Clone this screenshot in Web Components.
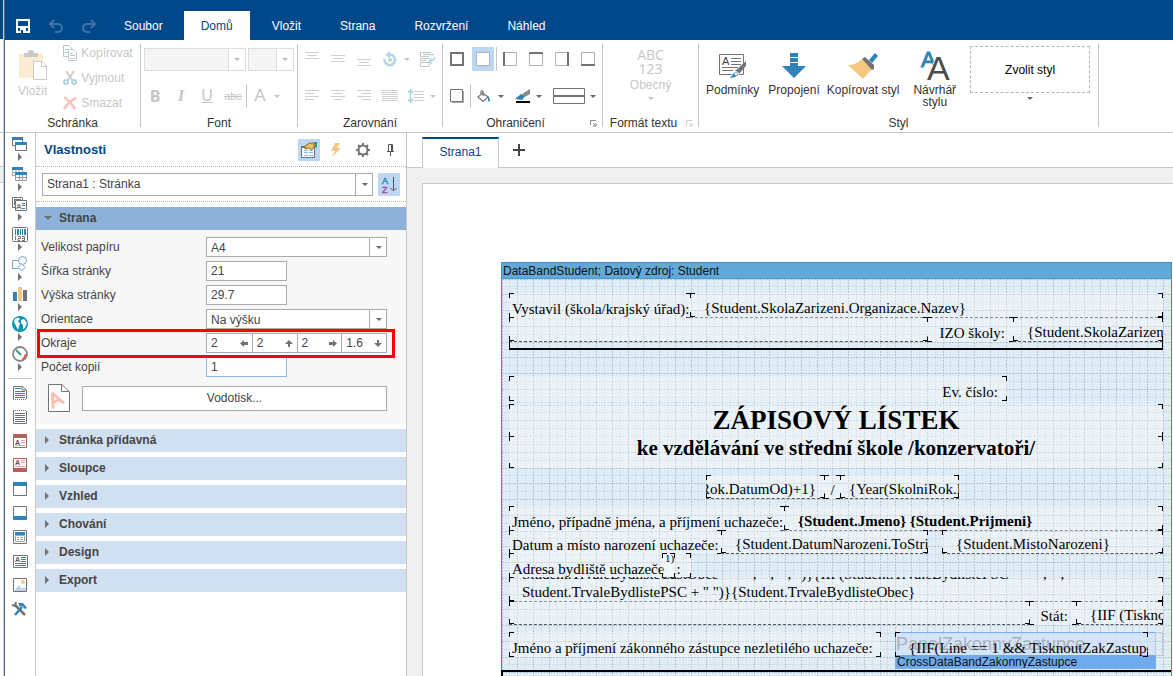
<!DOCTYPE html>
<html lang="cs">
<head>
<meta charset="utf-8">
<title>Návrhář sestav</title>
<style>
html,body{margin:0;height:100%;}
body{font:12px/16px "Liberation Sans",Arial,sans-serif;color:#444;background:#fff;overflow:hidden;}
</style>
</head>
<body>
<report-app></report-app>
<script>
const define = (name, html, init) => {
  const t = document.createElement('template');
  t.innerHTML = html;
  customElements.define(name, class extends HTMLElement {
    constructor() {
      super();
      this.attachShadow({mode: 'open'}).appendChild(t.content.cloneNode(true));
    }
    connectedCallback() { if (init) init(this, this.shadowRoot); }
  });
};

const B = '#2f83b7', G = '#737373';
const hl = (x, w, ys, c) => ys.map(y => `<path d="M${x} ${y}.5h${w}" stroke="${c}"/>`).join('');
const D = '#cfcfcf';
const ICONS = {
  save: [14, 14, `<path d="M0 0H14V14H0Z" fill="#fff"/><path d="M2 2H12V7H2ZM2 9H12V12H2Z" fill="#004889"/><path d="M4 9H10V14H4Z" fill="#fff"/><path d="M5 11h2v3H5Z" fill="#004889"/>`],
  undo: [14, 14, `<path d="M1 5H9A4 4 0 0 1 9 13H6M5 1L1 5L5 9" fill="none" stroke="#3e75a8" stroke-width="2"/>`],
  redo: [14, 14, `<path d="M13 5H5A4 4 0 0 0 5 13H8M9 1L13 5L9 9" fill="none" stroke="#3e75a8" stroke-width="2"/>`],
  down: [6, 3, `<path d="M0 0H6L3 3Z" fill="currentColor"/>`],
  open: [8, 4, `<path d="M0 0H8L4 4Z" fill="#6f6f6f"/>`],
  right: [4, 8, `<path d="M0 0L4 4L0 8Z" fill="${G}"/>`],
  paste: [28, 30, `<path d="M0 4H24V28H0Z" fill="#fcebd3"/><path d="M5 3H9V1Q12 -1 15 1V3H19V7H5Z" fill="#c9c9c9"/><path d="M14.5 11.500H23L27.500 16V29.500H14.500Z" fill="#fff" stroke="#c9c9c9"/><path d="M22.500 11.500V16.500H27.500" fill="none" stroke="#c9c9c9"/>`],
  copy: [14, 16, `<path d="M.5 .5H6L8.500 3V11.500H.5Z" fill="#fff" stroke="#c4c4c4"/><path d="M5.500 4.500H10.500L13.500 7.500V15.500H5.500Z" fill="#fff" stroke="#c4c4c4"/><path d="M2 4.500h3M2 7.500h3M7 8.500h3M7 10.500h5M7 13.500h5" stroke="#a9cde2"/>`],
  cut: [14, 14, `<path d="M3 0L9 9M11 0L5 9" stroke="#ccc" stroke-width="2"/><circle cx="3" cy="11" r="2" fill="none" stroke="#b0d2e6" stroke-width="2"/><circle cx="11" cy="11" r="2" fill="none" stroke="#b0d2e6" stroke-width="2"/>`],
  del: [14, 14, `<path d="M1 1Q7 5 12 13M13 2Q6 5 1 13" fill="none" stroke="#f7c3b9" stroke-width="2.500"/>`],
  atop: [14, 14, hl(0, 14, [0, 6], D) + hl(2, 10, [3], D)],
  amid: [14, 14, hl(0, 14, [3, 9], D) + hl(2, 10, [6], D)],
  abot: [14, 14, hl(0, 14, [7, 13], D) + hl(2, 10, [10], D)],
  aleft: [14, 12, hl(0, 14, [0, 6], D) + hl(0, 9, [3, 9], D)],
  acen: [14, 12, hl(0, 14, [0, 6], D) + hl(3, 8, [3, 9], D)],
  aright: [14, 12, hl(0, 14, [0, 6], D) + hl(5, 9, [3, 9], D)],
  ajust: [16, 12, hl(0, 16, [0, 2, 4, 6, 8, 10], D)],
  rotate: [14, 14, `<path d="M6 2.500A5.300 5.300 0 1 1 1.500 7" fill="none" stroke="#b4d5e6" stroke-width="2.500"/><path d="M7 -1V6L2 3Z" fill="#b4d5e6"/><circle cx="7" cy="8" r="2" fill="#b5dcc8"/>`],
  wrap: [16, 15, `<path d="M11 .5H.5V4.500H9M9 6.500H.5V8.500H6M9 10.500H.5V14.500H9V10.500" fill="none" stroke="#c6c6c6"/><path d="M3 2.500H14M15 5Q14 9 10 9M12 6L9 9L12 12" fill="none" stroke="#b4d5e6" stroke-width="1.500"/>`],
  spacing: [16, 14, `<path d="M2.500 1V13M0 4L2.500 1L5 4M0 10L2.500 13L5 10" fill="none" stroke="#b0d2e6" stroke-width="1.500"/>` + hl(6, 10, [2, 5, 8, 11], D)],
  ball: [14, 14, `<path d="M1 1H13V13H1Z" fill="none" stroke="${G}" stroke-width="2"/>`],
  bnone: [14, 14, `<path d="M.5 .5H13.500V13.500H.5Z" fill="#fff" stroke="#b0b0b0"/>`],
  bl: [14, 14, `<path d="M.5 .5H13.500V13.500H.5Z" fill="#fff" stroke="#b0b0b0"/><path d="M0 0H2V14H0Z" fill="${G}"/>`],
  bt: [14, 14, `<path d="M.5 .5H13.500V13.500H.5Z" fill="#fff" stroke="#b0b0b0"/><path d="M0 0H14V2H0Z" fill="${G}"/>`],
  br: [14, 14, `<path d="M.5 .5H13.500V13.500H.5Z" fill="#fff" stroke="#b0b0b0"/><path d="M12 0H14V14H12Z" fill="${G}"/>`],
  bb: [14, 14, `<path d="M.5 .5H13.500V13.500H.5Z" fill="#fff" stroke="#b0b0b0"/><path d="M0 12H14V14H0Z" fill="${G}"/>`],
  bshadow: [14, 14, `<path d="M2 2H14V14H2Z" fill="#aaa"/><path d="M.5 .5H12.500V12.500H.5Z" fill="#fff" stroke="${G}"/>`],
  bucket: [14, 13, `<path d="M5.500 3L11 7L6 11.500L1 7L5.500 3ZM4 5V1.500Q5.500 0 6 1.500V6" fill="none" stroke="${G}" stroke-width="1.200"/><path d="M9 5Q13 6 13 12L11 11V7Z" fill="${B}"/>`],
  pen: [16, 15, `<path d="M0 10L6 5L10 7L7 11Z" fill="${B}"/><path d="M7 5L15 0V5L10 8Z" fill="#8a8a8a"/><path d="M1 12H15V14H1Z" fill="#000"/>`],
  lines: [32, 16, `<path d="M.5 .5H31.500V15.500H.5Z" fill="#fff" stroke="${G}"/><path d="M0 7H32V9H0Z" fill="${G}"/>`],
  launch: [7, 7, `<path d="M.5 5V.5H6" fill="none" stroke="currentColor"/><path d="M3 3L6 6M6 3V6H3" fill="none" stroke="currentColor"/>`],
  cond: [28, 26, `<path d="M.5 1.500H24.500V21.500H.5Z" fill="#fff" stroke="${G}"/><text x="3" y="12" font-size="11" fill="#444">A</text><path d="M12 5.500H22M12 8.500H22M12 11.500H22M3 14.500H19M3 17.500H14" stroke="${G}"/><path d="M27 8V13L20 21L16 18Z" fill="${G}"/><path d="M9 25Q13 24 14 20Q18 17 20 21Q18 26 9 25Z" fill="${B}" stroke="#fff"/><circle cx="17" cy="21" r="1.500" fill="#fff"/>`],
  link: [24, 26, `<path d="M8 0H16V4H8ZM8 5H16V9H8ZM8 10H16V13H24L12 25L0 13H8Z" fill="${B}"/>`],
  brush: [30, 26, `<path d="M14 6L24 16L15 26L0 12Q8 12 14 6Z" fill="#f6c87f"/><path d="M14 6L17 4L26 12V16L24 17Z" fill="${G}"/><path d="M21 7L27 0L30 3L24 10Z" fill="${B}"/>`],
  styles: [30, 32, `<text x="1" y="17" font-size="22" fill="${B}" stroke="${B}">A</text><text x="7" y="30" font-size="34" fill="#4d4d4d" stroke="#fff" stroke-width="2" paint-order="stroke">A</text>`],
  props: [18, 16, `<path d="M1.500 4.500H14.500V15.500H1.500Z" fill="#fff" stroke="${G}"/><path d="M1 4H7V6H1Z" fill="${G}"/><path d="M4 8.500h4M9 8.500h4M4 10.500h4M9 10.500h4M4 13.500h4M9 13.500h4" stroke="#8db9e0"/><path d="M5 4Q9 0 14 1V6Q11 9 9 6L5 7Z" fill="#f0bd63" stroke="#8c6b2d"/><path d="M14 0H17V6L15 5Z" fill="#23a455"/>`],
  bolt: [10, 14, `<path d="M4 0H9L6 5H10L1 14L4 8H0Z" fill="#f6c87f"/>`],
  gear: [14, 14, `<circle cx="7" cy="7" r="4.500" fill="none" stroke="${G}" stroke-width="2"/><path d="M7 0V2M7 12V14M0 7H2M12 7H14M2 2L4 4M10 10L12 12M2 12L4 10M10 4L12 2" stroke="${G}" stroke-width="2"/>`],
  pin: [7, 12, `<path d="M1.500 7V.5H5.500V7M0 7.500H7M3.500 8V12M4.500 1V7" fill="none" stroke="#555"/>`],
  az: [16, 18, `<text x="1" y="8" font-size="9" fill="${B}" stroke="${B}" stroke-width=".4">A</text><text x="1" y="17" font-size="9" fill="#a14da0" stroke="#a14da0" stroke-width=".4">Z</text><path d="M12.500 1V14M9.500 12L12.500 15L15.500 12" fill="none" stroke="#555"/>`],
  left: [8, 7, `<path d="M0 3.500L4 0V2H8V5H4V7Z" fill="${G}"/>`],
  up: [8, 7, `<path d="M4 0L8 4H5V7H3V4H0Z" fill="${G}"/>`],
  rightArrow: [8, 7, `<path d="M8 3.500L4 0V2H0V5H4V7Z" fill="${G}"/>`],
  downArrow: [8, 7, `<path d="M4 7L8 3H5V0H3V3H0Z" fill="${G}"/>`],
  watermark: [22, 28, `<path d="M.5 .5H14L21.500 8V27.500H.5Z" fill="#fff" stroke="${G}"/><path d="M13.500 .5V7.500H21" fill="none" stroke="${G}"/><text x="2" y="22" font-size="20" fill="#f9bdb4" stroke="#f9bdb4" transform="rotate(-25 8 18)">A</text>`],
  bands: [16, 14, `<path d="M.5 .5H10.500V8.500H.5Z" fill="#fff" stroke="${G}"/><path d="M0 0H11V3H0Z" fill="${B}"/><path d="M3.500 5.500H14.500V13.500H3.500Z" fill="#fff" stroke="${G}"/><path d="M3 5H15V8H3Z" fill="${B}"/>`],
  tables: [16, 14, `<path d="M.5 .5H10.500V8.500H.5ZM4 1V9M7 1V9M1 5.500H10" fill="#fff" stroke="#aaa"/><path d="M0 0H11V3H0Z" fill="${B}"/><path d="M3.500 5.500H14.500V13.500H3.500ZM7.500 6V13M10.500 6V13M4 10.500H14" fill="#fff" stroke="#999"/><path d="M3 5H15V8H3Z" fill="${B}"/>`],
  comps: [16, 14, `<path d="M.5 .5H10.500V10.500H.5ZM2.500 3V8M2 2.500H9" fill="#fff" stroke="${G}"/><path d="M3.500 3.500H14.500V13.500H3.500Z" fill="#fff" stroke="${G}"/><text x="4" y="12" font-size="8" font-weight="bold" fill="${G}">A</text><path d="M10 6.500H13M10 8.500H13M10 11.500H13" stroke="${B}"/>`],
  barcode: [16, 15, `<rect x=".5" y=".5" width="15" height="14" rx="1" fill="#fff" stroke="${G}"/><path d="M3 2H4V8H3ZM5 2H7V8H5ZM8 2H9V8H8ZM10 2H11V8H10ZM12 2H14V8H12Z" fill="${B}"/><path d="M3.500 9V13M6 9.500H8.500V11.500H6V13.500H8M10 9.500H12.500V13.500H10M10 11.500H12" fill="none" stroke="${G}"/>`],
  shapes: [16, 16, `<path d="M.5 4.500H8.500V12.500H.5Z" fill="#fff" stroke="#7da6c4"/><circle cx="10.500" cy="4.500" r="4" fill="#fff" stroke="#7da6c4"/><path d="M9.500 7.500L13 11.500L9.500 15L6 11.500Z" fill="#fff" stroke="#7da6c4"/>`],
  chart: [15, 14, `<path d="M0 5H4V14H0Z" fill="${B}"/><path d="M5 0H9V14H5Z" fill="#f6c87f"/><path d="M10 3H14V14H10Z" fill="${G}"/>`],
  globe: [16, 16, `<circle cx="8" cy="8" r="8" fill="#0d96ad"/><path d="M2 6L3 3L6 1.500L8 3L6 5L8 8L7 10L6 14L4 10ZM9 4L12 3L15 7L13 12L11 13L11 9L9 7Z" fill="#fff"/>`],
  gauge: [16, 16, `<circle cx="8" cy="8" r="7" fill="#fff" stroke="#888" stroke-width="1.800"/><path d="M13.500 8Q13.500 12 10 13.500" fill="none" stroke="#e2604a" stroke-width="1.800"/><path d="M4 4L9 9" stroke="#35a08b" stroke-width="2"/>`],
  pageTop: [14, 14, `<path d="M.5 13V.5H9.500L13.500 4V13" fill="#fff" stroke="${G}"/><path d="M0 13.500H14" stroke="${G}" stroke-dasharray="1 1"/><path d="M2 2.500H8M2 5.500H12M2 7.500H12M2 9.500H12M2 11.500H12" stroke="${B}"/><path d="M9 1V4H13" fill="none" stroke="${G}"/>`],
  pageBot: [14, 14, `<path d="M.5 1V13.500H13.500V1" fill="#fff" stroke="${G}"/><path d="M0 .5H14" stroke="${G}" stroke-dasharray="1 1"/><path d="M2 3.500H12M2 5.500H12M2 7.500H12M2 9.500H12M2 11.500H12" stroke="${B}"/>`],
  headBand: [14, 14, `<path d="M.5 .5H13.500V13.500H.5Z" fill="#fff" stroke="#ad6358"/><path d="M0 0H14V4H0Z" fill="#ad6358"/><text x="2" y="11" font-size="7" font-weight="bold" fill="#555">A</text><path d="M8 6.500H12M8 8.500H12M2 11.500H12" stroke="#d9aaa5"/>`],
  footBand: [14, 14, `<path d="M.5 .5H13.500V13.500H.5Z" fill="#fff" stroke="#ad6358"/><path d="M0 10H14V14H0Z" fill="#ad6358"/><text x="2" y="7" font-size="7" font-weight="bold" fill="#555">A</text><path d="M8 2.500H12M8 4.500H12M2 8.500H12" stroke="#d9aaa5"/>`],
  headBlue: [14, 14, `<path d="M.5 .5H13.500V13.500H.5Z" fill="#fff" stroke="${G}"/><path d="M0 0H14V4H0Z" fill="${B}"/>`],
  footBlue: [14, 14, `<path d="M.5 .5H13.500V13.500H.5Z" fill="#fff" stroke="${G}"/><path d="M0 10H14V14H0Z" fill="${B}"/>`],
  dataBand: [14, 14, `<path d="M.5 .5H13.500V13.500H.5Z" fill="#fff" stroke="${G}"/><path d="M2 2H12V5H2Z" fill="${B}"/><path d="M2.500 5.500H11.500V11.500H2.500ZM4 7.500H6M7 7.500H10M4 9.500H6M7 9.500H10" fill="none" stroke="#7fb0d0"/>`],
  textComp: [15, 13, `<path d="M.5 .5H14.500V12.500H.5Z" fill="#fff" stroke="${G}"/><text x="2" y="7" font-size="7" font-weight="bold" fill="#555">A</text><path d="M8 2.500H13M8 4.500H13M8 6.500H13M2 8.500H13M2 10.500H13" stroke="${B}"/>`],
  image: [14, 14, `<path d="M.5 .5H13.500V13.500H.5Z" fill="#fff" stroke="${G}"/><circle cx="10" cy="4" r="2" fill="#f6c87f"/><path d="M1 13L6 7L9 11L11 9L13 11V13Z" fill="#bcd6e6"/>`],
  tools: [16, 14, `<path d="M3 3L13 13" stroke="${G}" stroke-width="2.500"/><path d="M0 3L3 4L4 0" fill="none" stroke="${G}" stroke-width="2"/><path d="M10 5L3 13" stroke="${B}" stroke-width="2.500"/><path d="M6 1H11L15 6L13 7L10 4L8 5Z" fill="${B}"/>`],
  plus: [12, 12, `<path d="M5 0H7V5H12V7H7V12H5V7H0V5H5Z" fill="#444"/>`]
};
customElements.define('ui-icon', class extends HTMLElement {
  constructor() { super(); this.attachShadow({mode: 'open'}); }
  connectedCallback() {
    const [w, h, body] = ICONS[this.getAttribute('name')];
    this.shadowRoot.innerHTML = `<style>:host{display:inline-flex;flex:none}svg{display:block;overflow:visible;font-family:"Liberation Sans",sans-serif}</style><svg width="${w}" height="${h}" viewBox="0 0 ${w} ${h}" aria-hidden="true">${body}</svg>`;
  }
});

/* Title bar with quick access and ribbon tabs */
define('app-header', `<style>
:host{display:flex;height:40px;background:#004889;align-items:flex-end}
button{border:0;background:none;font:inherit;color:#fff;padding:0;height:29px}
.quick{display:flex;padding-left:11px;gap:19px;margin-right:18px}
.quick button{width:14px;display:flex;align-items:center}
nav{display:flex;gap:5px}
nav button{padding:0 17px}
nav button:first-child{padding-right:16px}
nav .on{background:#fff;color:#004889}
</style>
<div class="quick"><button aria-label="Uložit"><ui-icon name="save"></ui-icon></button><button aria-label="Zpět"><ui-icon name="undo"></ui-icon></button><button aria-label="Znovu"><ui-icon name="redo"></ui-icon></button></div>
<nav><button style="padding-left:10px">Soubor</button><button class="on">Domů</button><button>Vložit</button><button>Strana</button><button>Rozvržení</button><button>Náhled</button></nav>`);

define('ribbon-group', `<style>
:host{display:flex;flex-direction:column;flex:0 0 auto;box-sizing:border-box;border-right:1px solid #c6c6c6;width:var(--w)}
.body{flex:1;display:flex;min-height:0}
footer{display:flex;height:12px;position:relative;justify-content:center;color:#333}
:host([launcher]) footer{padding-right:14px}
ui-icon{position:absolute;right:5px;top:5px;color:#888}
:host([off]) ui-icon{color:#ccc}
</style><div class="body"><slot></slot></div><footer><span></span></footer>`, (h, r) => {
  h.style.setProperty('--w', h.getAttribute('width') + 'px');
  r.querySelector('span').textContent = h.getAttribute('label');
  if (h.hasAttribute('launcher')) { const i = document.createElement('ui-icon'); i.setAttribute('name', 'launch'); r.querySelector('footer').append(i); }
});

/* Drop-down with its own arrow cell */
define('drop-down', `<style>
:host{display:block;height:var(--h,20px);position:relative;box-sizing:border-box}
select{appearance:none;width:100%;height:100%;box-sizing:border-box;border:1px solid #ababab;border-radius:0;background:#fff;font:inherit;color:#444;padding:0 20px 1px 4px;margin:0;display:block;opacity:1}
i{position:absolute;right:0;top:0;bottom:0;width:18px;border-left:1px solid #ababab;box-sizing:border-box;display:flex;align-items:center;justify-content:center;color:#666;pointer-events:none}
:host([disabled]) select{background:#f5f5f5;border-color:#ddd}
:host([disabled]) i{border:1px solid #ddd;background:#fff;color:#bbb}
</style><select><option></option></select><i><ui-icon name="down"></ui-icon></i>`, (h, r) => {
  const s = r.querySelector('select');
  s.setAttribute('aria-label', h.getAttribute('label') || '');
  s.options[0].textContent = h.getAttribute('value') || '';
  s.disabled = h.hasAttribute('disabled');
});

define('ribbon-bar', `<style>
:host{display:flex;height:93px;padding:4px 0 5px;border-bottom:1px solid #c6c6c6;box-sizing:border-box}
button{border:0;background:none;padding:0;margin:0;font:inherit;color:#333;display:flex;align-items:center;justify-content:center;white-space:nowrap}
.col{display:flex;flex-direction:column}
.row{display:flex;align-items:center;height:24px}
.row button{width:26px;height:24px}
.row .sm{width:8px;color:#666}
.off,.off button,.row .sm.off,.off .sm{color:#c6c6c6}
.sep{width:1px;height:24px;background:#c6c6c6}
.big{flex-direction:column;justify-content:flex-start;line-height:12px}
.big .ic{height:35px;display:flex;align-items:center;margin-bottom:1px}
.sel{background:#bdd6f1}
.clip{margin-top:-4px}
.clip button{justify-content:flex-start;gap:3px;height:25px;flex:none}
.clip ui-icon{width:15px}
.row .end{justify-content:flex-end;margin-right:4px}
.gallery{width:120px;height:47px;border:1px dashed #b5b5b5;color:#000}
</style>
<ribbon-group label="Schránka" width="136">
 <button class="big off" disabled style="margin:6px 16px 0 13px"><ui-icon name="paste"></ui-icon><span style="margin-top:5px">Vložit</span></button>
 <div class="col clip off"><button disabled><ui-icon name="copy"></ui-icon>Kopírovat</button><button disabled><ui-icon name="cut"></ui-icon>Vyjmout</button><button disabled><ui-icon name="del"></ui-icon>Smazat</button></div>
</ribbon-group>
<ribbon-group label="Font" width="157">
 <div class="col off" style="padding:3px 0 0 1px;gap:13px">
 <div class="row" style="gap:2px;padding-left:2px"><drop-down disabled label="Písmo" style="--h:23px;width:102px"></drop-down><drop-down disabled label="Velikost" style="--h:23px;width:46px"></drop-down></div>
 <div class="row"><button disabled style="font:bold 16px 'Open Sans',sans-serif">B</button><button disabled style="font:italic bold 17px 'Liberation Serif',serif">I</button><button disabled style="font-size:16px;text-decoration:underline">U</button><button disabled style="font-size:11px;text-decoration:line-through">abc</button><span class="sep"></span><button disabled style="font-size:17px">A</button><button class="sm" disabled aria-label="Barva"><ui-icon name="down"></ui-icon></button></div></div>
</ribbon-group>
<ribbon-group label="Zarovnání" width="145">
 <div class="col off" style="padding:3px 0 0 1px;gap:13px">
 <div class="row"><button><ui-icon name="atop"></ui-icon></button><button><ui-icon name="amid"></ui-icon></button><button><ui-icon name="abot"></ui-icon></button><button><ui-icon name="rotate"></ui-icon></button><button class="sm"><ui-icon name="down"></ui-icon></button><button style="width:34px"><ui-icon name="wrap"></ui-icon></button></div>
 <div class="row"><button><ui-icon name="aleft"></ui-icon></button><button><ui-icon name="acen"></ui-icon></button><button><ui-icon name="aright"></ui-icon></button><button><ui-icon name="ajust"></ui-icon></button><button><ui-icon name="spacing"></ui-icon></button><button class="sm"><ui-icon name="down"></ui-icon></button></div></div>
</ribbon-group>
<ribbon-group label="Ohraničení" width="160" launcher>
 <div class="col" style="padding:3px 0 0 1px;gap:13px">
 <div class="row"><button><ui-icon name="ball"></ui-icon></button><button class="sel" style="width:22px;margin:0 2px"><ui-icon name="bnone"></ui-icon></button><span class="sep"></span><button><ui-icon name="bl"></ui-icon></button><button><ui-icon name="bt"></ui-icon></button><button><ui-icon name="br"></ui-icon></button><button><ui-icon name="bb"></ui-icon></button></div>
 <div class="row"><button><ui-icon name="bshadow"></ui-icon></button><span class="sep"></span><button><ui-icon name="bucket"></ui-icon></button><button class="sm"><ui-icon name="down"></ui-icon></button><button class="end"><ui-icon name="pen"></ui-icon></button><button class="sm"><ui-icon name="down"></ui-icon></button><button class="end" style="width:42px"><ui-icon name="lines"></ui-icon></button><button class="sm"><ui-icon name="down"></ui-icon></button></div></div>
</ribbon-group>
<ribbon-group label="Formát textu" width="96" launcher off>
 <button class="big off" disabled style="width:100%;padding-top:4px"><span style="font:14px/14px 'Open Sans',sans-serif;margin-bottom:3px">ABC<br>123</span>Obecný<ui-icon name="down" style="margin-top:6px"></ui-icon></button>
</ribbon-group>
<ribbon-group label="Styl" width="400">
 <button class="big" style="margin:4px 0 0 7px"><span class="ic"><ui-icon name="cond"></ui-icon></span>Podmínky</button>
 <button class="big" style="margin:4px 0 0 9px"><span class="ic"><ui-icon name="link"></ui-icon></span>Propojení</button>
 <button class="big" style="margin:4px 0 0 7px"><span class="ic"><ui-icon name="brush"></ui-icon></span>Kopírovat styl</button>
 <button class="big" style="margin:4px 0 0 14px"><span class="ic"><ui-icon name="styles"></ui-icon></span>Návrhář<br>stylu</button>
 <div class="col" style="margin:2px 0 0 14px;align-items:center;gap:4px;color:#666"><button class="gallery">Zvolit styl</button><ui-icon name="down"></ui-icon></div>
</ribbon-group>`);

define('tool-box', `<style>
:host{display:flex;flex-direction:column;align-items:stretch;flex:0 0 30px;border-right:1px solid #c6c6c6;padding-top:3px}
button{border:0;background:none;padding:0;height:30px;display:flex;flex-direction:column;align-items:center;gap:1px}
button ui-icon:first-child{height:16px;align-items:center}
hr{margin:2px 3px;border:0;border-top:1px solid #c6c6c6;width:24px}
.s{height:24px;justify-content:center}
</style>`, (h, r) => {
  const mk = (n, s) => `<button aria-label="${n}"${s ? ' class="s"' : ''}><ui-icon name="${n}"></ui-icon>${s ? '' : '<ui-icon name="right"></ui-icon>'}</button>`;
  r.innerHTML += ['bands','tables','comps','barcode','shapes','chart','globe','gauge'].map(n => mk(n)).join('') + '<hr>' +
    ['pageTop','pageBot','headBand','footBand','headBlue','footBlue','dataBand','textComp','image','tools'].map(n => mk(n, 1)).join('');
});

define('panel-section', `<style>
:host{display:block}
button{display:flex;align-items:center;width:100%;height:23px;border:0;padding:0 0 1px 9px;background:#d1e0f1;font:inherit;font-weight:bold;color:#444;text-align:left}
button span{width:14px;display:flex}
:host([open]) button{background:#8eb1d9;padding-left:8px}
:host([open]) button span{width:15px}
</style><button><span></span><b></b></button><slot></slot>`, (h, r) => {
  r.querySelector('b').textContent = h.getAttribute('label');
  r.querySelector('span').innerHTML = `<ui-icon name="${h.hasAttribute('open') ? 'open' : 'right'}"></ui-icon>`;
});

define('properties-panel', `<style>
:host{display:block;flex:0 0 370px;border-right:1px solid #c6c6c6;background:#fff}
header{display:flex;align-items:center;height:33px;padding:0 5px 0 8px;border-bottom:1px dotted #b5b5b5}
h2{margin:0;font-size:13px;color:#004889;flex:1}
button{border:0;background:none;padding:0;display:flex;align-items:center;justify-content:center;font:inherit;color:#444}
header button{width:22px;height:22px;margin-left:5px}
.sel{background:#bdd6f1}
.pick{display:flex;gap:5px;padding:6px 6px 5px;border-bottom:1px dotted #b5b5b5;margin-bottom:5px;height:23px}
.pick drop-down{flex:1;--h:23px}
.pick button{width:22px;height:23px}
.form{background:#f7f7f7;padding:7px 0 12px}
.line{display:grid;grid-template-columns:165px 181px;height:24px;padding-left:5px;align-items:start;line-height:20px}
input{box-sizing:border-box;width:81px;height:20px;border:1px solid #ababab;padding:0 4px;font:inherit;color:#444;background:#fff;margin:0;border-radius:0}
input.focus{border-color:#90b8e4}
.margins{display:grid;grid-template-columns:repeat(4,1fr);border:1px solid #ababab;background:#fff;height:18px}
.margins div{display:flex;align-items:center;padding-right:4px}
.margins div+div{border-left:1px solid #ababab}
.margins input{border:0;width:0;flex:1;height:18px}
.frame{position:relative}
.frame::after{content:"";position:absolute;left:1px;top:-4px;width:352px;height:23px;border:3px solid #f00;pointer-events:none}
.wm{display:flex;gap:12px;padding:3px 19px 0 12px;align-items:center}
.wm button{flex:1;height:25px;border:1px solid #ababab;background:#fff}
panel-section{margin-bottom:5px}
</style>
<header><h2>Vlastnosti</h2><button class="sel" aria-label="Vlastnosti"><ui-icon name="props"></ui-icon></button><button aria-label="Události"><ui-icon name="bolt"></ui-icon></button><button aria-label="Nastavení"><ui-icon name="gear"></ui-icon></button><button aria-label="Připnout"><ui-icon name="pin"></ui-icon></button></header>
<div class="pick"><drop-down label="Komponenta" value="Strana1 : Stránka"></drop-down><button class="sel" aria-label="Seřadit"><ui-icon name="az"></ui-icon></button></div>
<panel-section open label="Strana"><div class="form">
<div class="line"><span>Velikost papíru</span><drop-down label="Velikost papíru" value="A4"></drop-down></div>
<div class="line"><label for="w">Šířka stránky</label><input id="w" value="21"></div>
<div class="line"><label for="h">Výška stránky</label><input id="h" value="29.7"></div>
<div class="line"><span>Orientace</span><drop-down label="Orientace" value="Na výšku"></drop-down></div>
<div class="line frame"><label for="ml">Okraje</label><div class="margins"><div><input id="ml" value="2"><ui-icon name="left"></ui-icon></div><div><input aria-label="Horní okraj" value="2"><ui-icon name="up"></ui-icon></div><div><input aria-label="Pravý okraj" value="2"><ui-icon name="rightArrow"></ui-icon></div><div><input aria-label="Dolní okraj" value="1.6"><ui-icon name="downArrow"></ui-icon></div></div></div>
<div class="line"><label for="c">Počet kopií</label><input id="c" class="focus" value="1"></div>
<div class="wm"><ui-icon name="watermark"></ui-icon><button>Vodotisk...</button></div>
</div></panel-section>
<panel-section label="Stránka přídavná"></panel-section><panel-section label="Sloupce"></panel-section><panel-section label="Vzhled"></panel-section><panel-section label="Chování"></panel-section><panel-section label="Design"></panel-section><panel-section label="Export"></panel-section>`);

/* A text component placed on the report canvas; box = "x y width height" in band coordinates */
define('report-text', `<style>
:host{position:absolute;left:var(--x);top:var(--y);width:var(--bw);height:var(--bh);box-sizing:border-box;overflow:hidden;display:flex;align-items:flex-end;font:15px/18px "Liberation Serif","Times New Roman",serif;color:#000;white-space:nowrap;background:rgba(255,255,255,.35);padding:0 0 0 3px}
:host([field]){padding-left:14px}
:host([end]){justify-content:flex-end;padding-right:9px}
:host([center]){justify-content:center;padding:0}
:host([top]){align-items:flex-start}
:host([rule]){border-bottom:1px dashed #555}
.c{position:absolute;width:4px;height:4px;border:0 solid #000}
.c:nth-of-type(1){left:0;top:0;border-width:1px 0 0 1px}
.c:nth-of-type(2){right:0;top:0;border-width:1px 1px 0 0}
.c:nth-of-type(3){left:0;bottom:0;border-width:0 0 1px 1px}
.c:nth-of-type(4){right:0;bottom:0;border-width:0 1px 1px 0}
</style><i class="c"></i><i class="c"></i><i class="c"></i><i class="c"></i><slot></slot>`, h => {
  ['--x', '--y', '--bw', '--bh'].forEach((p, i) => h.style.setProperty(p, h.getAttribute('box').split(' ')[i] + 'px'));
});

define('report-canvas', `<style>
:host{display:flex;flex-direction:column;flex:1;min-width:0;min-height:0;background:#f0f0f0}
.tabs{display:flex;height:34px;background:#fff;border-bottom:1px solid #c6c6c6;padding:0 15px;align-items:flex-end;box-sizing:content-box}
.tabs button{border:0;background:none;font:inherit;padding:0;display:flex;align-items:center;justify-content:center;width:39px;height:34px}
.tabs .on{width:77px;height:31px;margin-bottom:-1px;padding-bottom:3px;border:1px solid #c6c6c6;border-top:2px solid #004889;border-bottom:0;background:#fff;color:#004889;box-sizing:border-box}
.sheet{flex:1;min-height:0;margin:15px 0 0 15px;border:1px solid #c6c6c6;border-width:1px 0 0 1px;background:#fff;padding:78px 1px 0 78px;overflow:hidden;display:flex;flex-direction:column}
.band{flex:1;display:flex;flex-direction:column;min-height:0;border:1px solid #3f8fc2;border-bottom:0;background:#e0edf6;min-width:670px;box-sizing:border-box}
.title{background:#62a9d7;border-bottom:1px solid #4b9bd0;height:15px;color:#111;line-height:16px;padding-left:1px}
.area{position:relative;flex:1;min-height:0}
.grid{position:absolute;inset:0;width:100%;height:100%}
.rule{position:absolute;left:7px;top:58px;width:652px;height:11px;border:1px solid #000;border-width:0 1px 2px}
.next{position:absolute;left:-1px;top:391px;right:0;height:40px;border:2px solid #000;border-width:2px 0 0 2px}
.panel{position:absolute;left:393px;top:353px;width:261px;height:37px;border:1px solid #78aef0;box-sizing:border-box;background:rgba(210,226,247,.8);overflow:hidden;display:flex;flex-direction:column;justify-content:space-between;color:#a9b2bc;font-size:18px;line-height:22px}
.panel b{font:12px/15px "Liberation Sans",sans-serif;background:#6eaaed;color:#111;height:13px;padding-left:1px;overflow:hidden}
.ghost{position:absolute;left:653px;top:353px;width:8px;height:24px;border:1px solid #c3c8cc;box-sizing:border-box}
.clear{background:none}
.t1{font-size:27px;line-height:32px;font-weight:bold}
.t2{font-size:21px;line-height:24px;font-weight:bold}
.sup{font-size:11px;line-height:11px}
</style>
<div class="tabs"><button class="on">Strana1</button><button aria-label="Přidat stranu"><ui-icon name="plus"></ui-icon></button></div>
<div class="sheet"><div class="band"><div class="title">DataBandStudent; Datový zdroj: Student</div><div class="area">
<svg class="grid" aria-hidden="true"><defs><pattern id="g" width="63" height="63" patternUnits="userSpaceOnUse"><g fill="none" stroke="#c7d5df" stroke-dasharray="1 1"><path d="M7.500 0V63M23.500 0V63M39.500 0V63M55.500 0V63M0 7.500H63M0 23.500H63M0 39.500H63M0 55.500H63"/><path stroke="#b6c4cf" stroke-dasharray="2 1" d="M.5 0V63M15.500 0V63M31.500 0V63M47.500 0V63M0 .5H63M0 15.500H63M0 31.500H63M0 47.500H63"/></g></pattern></defs><rect width="100%" height="100%" fill="url(#g)"/></svg>
<report-text box="7 14 182 25">Vystavil (škola/krajský úřad):</report-text>
<report-text box="188 14 473 25" field rule>{Student.SkolaZarizeni.Organizace.Nazev}</report-text>
<report-text box="7 38 419 25" rule></report-text>
<report-text box="425 38 87 25" end>IZO školy:</report-text>
<report-text box="511 38 150 25" field rule>{Student.SkolaZarizeni</report-text>
<div class="rule"></div>
<report-text box="7 97 498 25" end>Ev. číslo:</report-text>
<report-text box="7 125 654 33" center top class="t1">ZÁPISOVÝ LÍSTEK</report-text>
<report-text box="7 157 654 32" center top class="t2">ke vzdělávání ve střední škole /konzervatoři/</report-text>
<report-text box="204 196 119 24" end rule>Rok.DatumOd)+1}</report-text>
<report-text box="322 196 17 24" center>/</report-text>
<report-text box="338 196 119 24" rule style="padding-left:9px">{Year(SkolniRok.D</report-text>
<report-text box="7 227 276 25">Jméno, případně jména, a příjmení uchazeče:</report-text>
<report-text box="282 227 379 25" field rule style="font-weight:bold">{Student.Jmeno} {Student.Prijmeni}</report-text>
<report-text box="7 251 213 24">Datum a místo narození uchazeče:</report-text>
<report-text box="219 251 207 24" field rule>{Student.DatumNarozeni.ToStrin</report-text>
<report-text box="440 251 221 24" field rule>{Student.MistoNarozeni}</report-text>
<report-text box="7 274 182 25">Adresa bydliště uchazeče<span style="padding-left:12px">:</span></report-text>
<report-text box="160 274 13 25" top class="sup">1)</report-text>
<report-text box="7 298 654 25" style="padding-left:13px" rule><span>Student.TrvaleBydlisteCastObce == " , " , " , ")}{IIF(Student.TrvaleBydlistePSC == " , " ,<br>Student.TrvaleBydlistePSC + " ")}{Student.TrvaleBydlisteObec}</span></report-text>
<report-text box="7 322 521 24" rule></report-text>
<report-text box="527 322 48 24" end>Stát:</report-text>
<report-text box="574 322 87 24" field rule>{IIF (Tisknou</report-text>
<report-text box="7 353 372 25">Jméno a příjmení zákonného zástupce nezletilého uchazeče:</report-text>
<div class="panel"><span>PanelZakonnyZastupce</span><b>CrossDataBandZakonnyZastupce</b></div><div class="ghost"></div>
<report-text box="393 353 253 25" field class="clear">{IIF(Line == 1 &amp;&amp; TisknoutZakZastupc</report-text>
<div class="next"></div>
</div></div></div>`);

define('report-app', `<style>
:host{display:flex;height:100vh}
.edge{flex:0 0 3px;background:linear-gradient(#004889 39px,#fff 39px,#fff 132px,#c6c6c6 132px,#c6c6c6 133px,#fff 133px,#fff 166px,#c6c6c6 166px,#c6c6c6 167px,#f0f0f0 167px,#f0f0f0 182px,#c6c6c6 182px,#c6c6c6 183px,#fff 183px);border-right:1px solid #c3d2d6}
.line{flex:0 0 1px;background:#55686e}
.app{flex:1;min-width:0;display:flex;flex-direction:column}
.work{flex:1;display:flex;min-height:0}
</style><div class="edge"></div><div class="line"></div><div class="app"><app-header></app-header><ribbon-bar></ribbon-bar><div class="work"><tool-box></tool-box><properties-panel></properties-panel><report-canvas></report-canvas></div></div>`);
</script>
</body>
</html>
